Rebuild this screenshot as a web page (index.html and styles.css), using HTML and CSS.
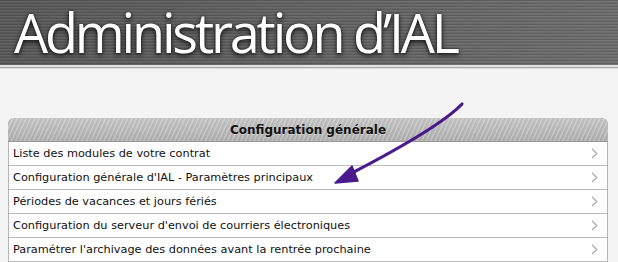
FILE: index.html
```html
<!DOCTYPE html>
<html lang="fr">

<head>
    <meta charset="UTF-8">
    <title>Administration d'IAL</title>
    <link rel="stylesheet" href="styles.css">
</head>

<body>
    <!-- bandeau -->
    <div class="banner">
        <h1>Administration d&#8217;IAL</h1>
    </div>
    <div class="banner-rule"></div>

    <div class="content">
        <div class="panel">
            <div class="panel-head">Configuration générale</div>
            <a class="item" href="#">Liste des modules de votre contrat</a>
            <a class="item" href="#">Configuration générale d'IAL - Paramètres principaux</a>
            <a class="item" href="#">Périodes de vacances et jours fériés</a>
            <a class="item" href="#">Configuration du serveur d'envoi de courriers électroniques</a>
            <a class="item" href="#">Paramétrer l'archivage des données avant la rentrée prochaine</a>
        </div>
    </div>

    <!-- fleche annotation -->
    <svg class="arrow" width="618" height="262" viewBox="0 0 618 262">
        <path d="M462 104 C 445 122, 400 148, 352 173" fill="none" stroke="#4a1a8c" stroke-width="3.2" stroke-linecap="round" />
        <polygon points="335,183 352,166 358,181" fill="#4a1a8c" stroke="#4a1a8c" stroke-width="1.5" stroke-linejoin="round" />
    </svg>
</body>

</html>
```

FILE: styles.css
```css
* {
    margin: 0;
    padding: 0;
    box-sizing: border-box;
}

body {
    background-color: #f4f4f4;
    font-family: "DejaVu Sans", Verdana, sans-serif;
    position: relative;
    width: 618px;
    height: 262px;
    overflow: hidden;
}

.banner {
    height: 67px;
    background:
        repeating-linear-gradient(180deg, rgba(0, 0, 0, 0.12) 0px, rgba(0, 0, 0, 0.12) 1px, rgba(255, 255, 255, 0.05) 1px, rgba(255, 255, 255, 0.05) 2px, rgba(0, 0, 0, 0) 2px, rgba(0, 0, 0, 0) 3px),
        linear-gradient(90deg, #5a5a5a 0%, #646464 50%, #6e6e6e 100%);
    border-bottom: 2px solid #e2e2e2;
}

.banner h1 {
    font-family: "Open Sans", sans-serif;
    font-weight: 400;
    font-size: 54px;
    letter-spacing: -3.2px;
    line-height: 64px;
    color: #fff;
    padding-left: 14px;
    text-shadow: 0 2px 5px rgba(0, 0, 0, 0.85), 0 0 2px rgba(0, 0, 0, 0.6);
}

.banner-rule {
    height: 2px;
    background-color: #a9a9a9;
    border-bottom: 1px solid #dcdcdc;
}

.content {
    padding: 49px 10px 0 8px;
}

.panel {
    width: 600px;
    border: 1px solid #b5b5b5;
    border-top: none;
    border-radius: 6px 6px 0 0;
    background-color: #fff;
}

.panel-head {
    height: 24px;
    line-height: 24px;
    text-align: center;
    font-size: 12px;
    font-weight: bold;
    color: #111;
    border-radius: 6px 6px 0 0;
    margin: 0 -1px;
    background:
        repeating-linear-gradient(115deg, rgba(255, 255, 255, 0.2) 0px, rgba(255, 255, 255, 0.2) 1px, rgba(0, 0, 0, 0.05) 2px, rgba(0, 0, 0, 0) 4px),
        linear-gradient(180deg, #c6c6c6 0%, #b0b0b0 100%);
    border-bottom: 1px solid #999;
    text-shadow: 0 1px 0 rgba(255, 255, 255, 0.35);
}

.item {
    display: block;
    position: relative;
    height: 24px;
    line-height: 24px;
    padding-left: 4px;
    font-size: 11.3px;
    color: #111;
    text-decoration: none;
    border-bottom: 1px solid #bdbdbd;
}

.item::after {
    content: "";
    position: absolute;
    right: 11px;
    top: 8px;
    width: 6px;
    height: 6px;
    border-top: 1.5px solid #9a9a9a;
    border-right: 1.5px solid #9a9a9a;
    transform: rotate(45deg);
}

.arrow {
    position: absolute;
    left: 0;
    top: 0;
    pointer-events: none;
}
```
